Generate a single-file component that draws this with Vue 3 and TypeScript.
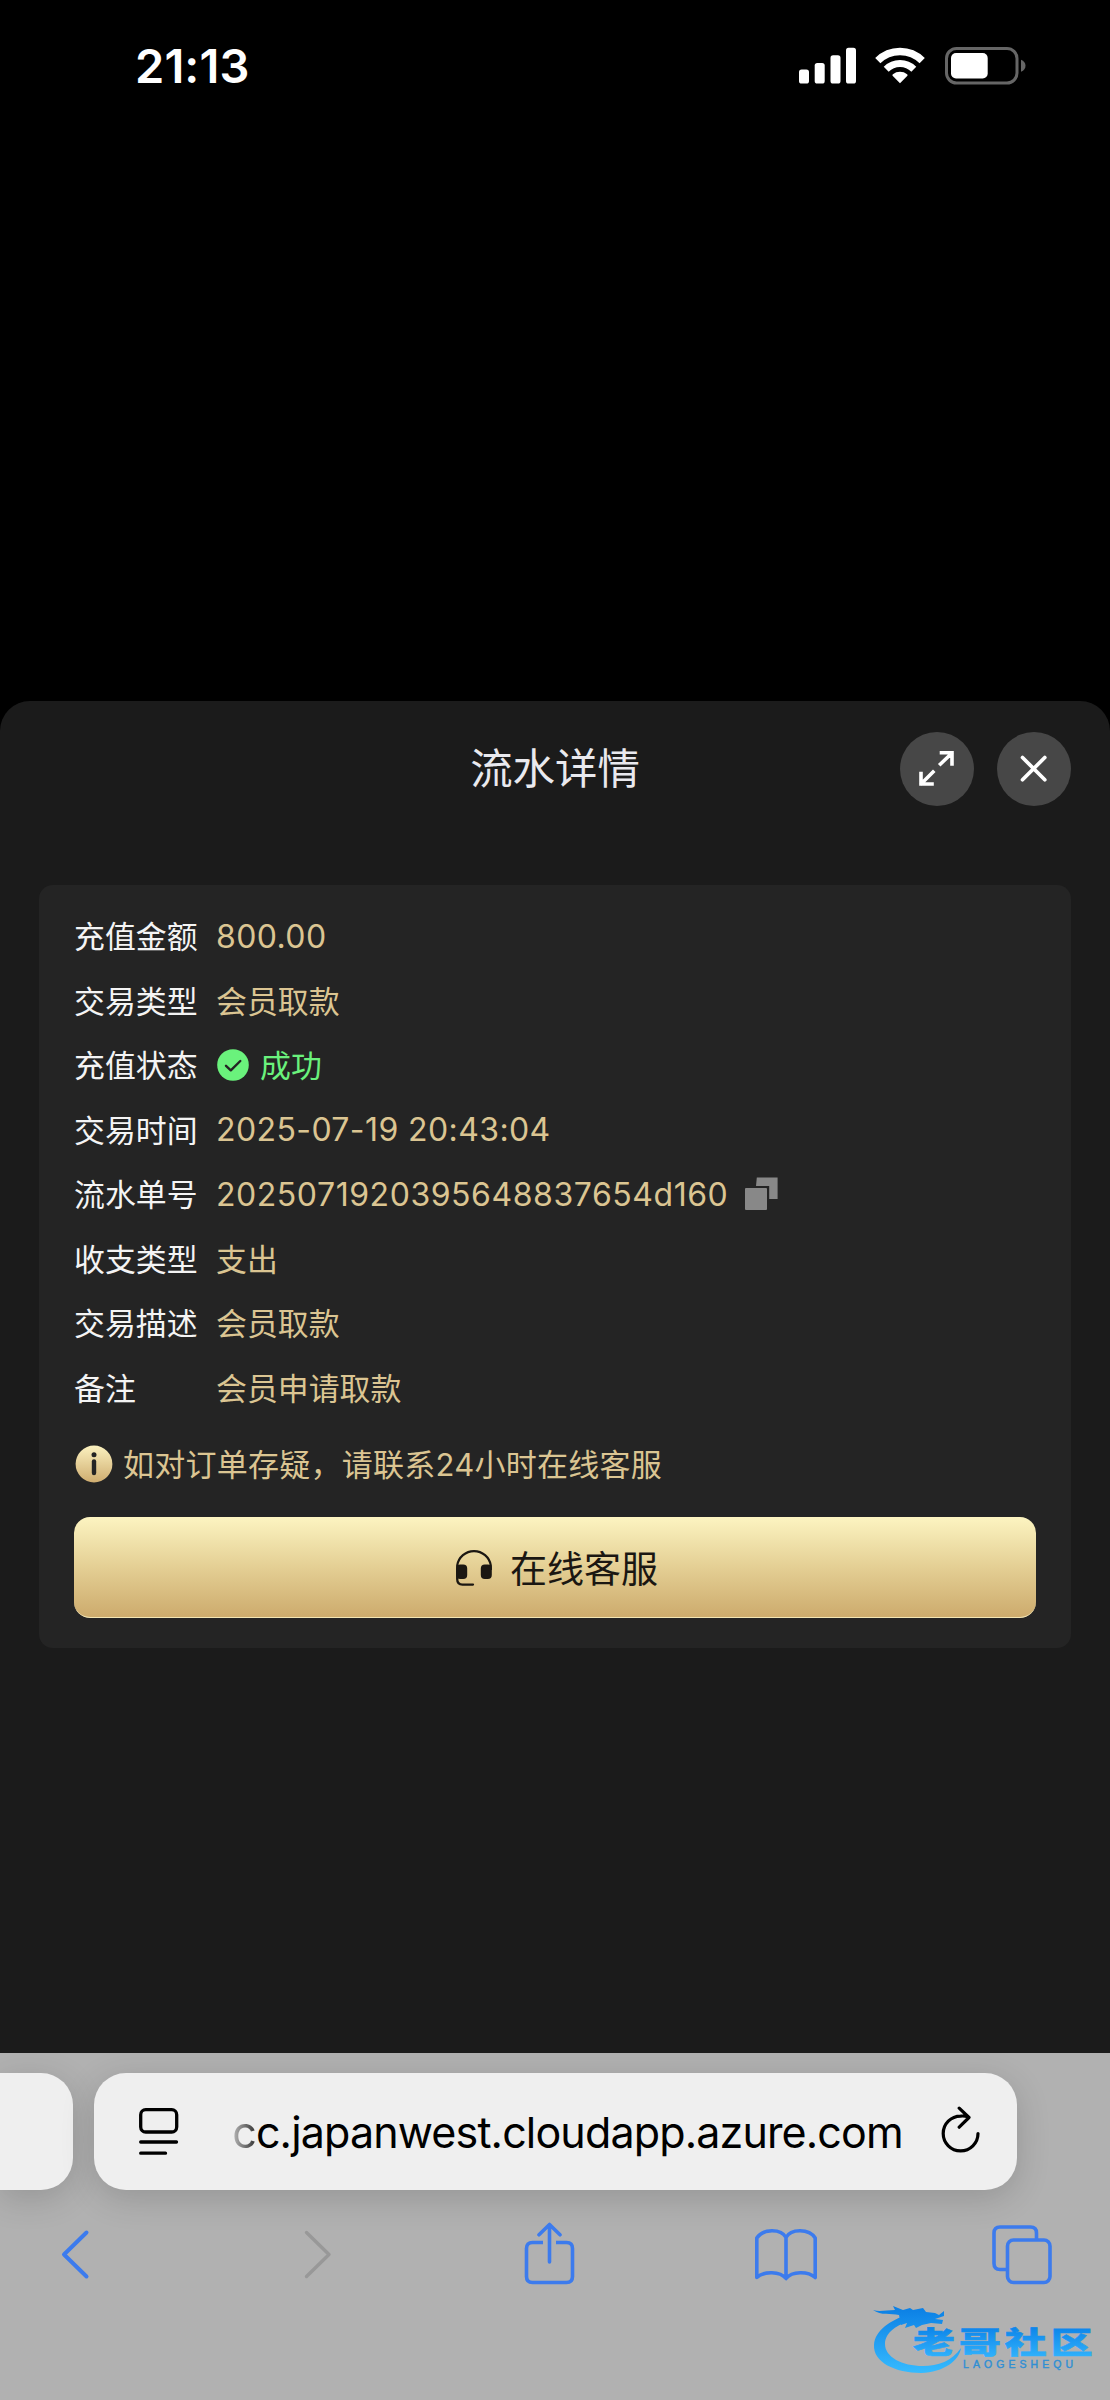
<script setup lang="ts">
interface DetailRow {
  label: string
  value: string
  kind?: 'status' | 'copy'
}

const rows: DetailRow[] = [
  { label: '充值金额', value: '800.00' },
  { label: '交易类型', value: '会员取款' },
  { label: '充值状态', value: '成功', kind: 'status' },
  { label: '交易时间', value: '2025-07-19 20:43:04' },
  { label: '流水单号', value: '2025071920395648837654d160', kind: 'copy' },
  { label: '收支类型', value: '支出' },
  { label: '交易描述', value: '会员取款' },
  { label: '备注', value: '会员申请取款' },
]
</script>

<template>
  <div class="screen" lang="zh-CN">
    <header class="status-bar">
      <span class="clock">21:13</span>
      <div class="indicators">
        <svg class="signal" width="58" height="37" viewBox="0 0 58 37" fill="#fff">
          <rect x="0" y="22.5" width="10" height="14" rx="2.6" />
          <rect x="15.7" y="16" width="10" height="20.5" rx="2.6" />
          <rect x="31.5" y="8.3" width="10" height="28.2" rx="2.6" />
          <rect x="47" y="0.7" width="10" height="35.8" rx="2.6" />
        </svg>
        <svg class="wifi" width="50" height="37" viewBox="0 0 50 37">
          <g fill="none" stroke="#fff">
            <path d="M2.8 13.7A31.5 31.5 0 0 1 47.2 13.7" stroke-width="7.4" />
            <path d="M11.2 22.3A19.6 19.6 0 0 1 38.8 22.3" stroke-width="7" />
          </g>
          <path d="M25 36.300 17.600 28.800Q17 28 17.900 27.300A11.500 11.500 0 0 1 32.100 27.300Q33 28 32.400 28.800Z" fill="#fff" />
        </svg>
        <svg class="battery" width="82" height="38" viewBox="0 0 82 38">
          <rect x="1.5" y="1.5" width="70.5" height="34.5" rx="10" fill="none" stroke="#666" stroke-width="3" />
          <rect x="6" y="6" width="36.7" height="25.5" rx="5" fill="#fff" />
          <path d="M76 12.700Q80.500 14.500 80.500 18.700T76 24.700Z" fill="#666" />
        </svg>
      </div>
    </header>

    <main class="sheet">
      <div class="sheet-head">
        <h1>流水详情</h1>
        <div class="actions">
          <button class="round" aria-label="全屏">
            <svg width="74" height="74" viewBox="0 0 74 74" fill="none" stroke="#fff" stroke-width="3.6" stroke-linecap="square">
              <path d="M40.500 32 51.500 21.500M41.500 20.700H52V32M33 40 21.500 51.500M21 41.500V52H32" />
            </svg>
          </button>
          <button class="round" aria-label="关闭">
            <svg width="74" height="74" viewBox="0 0 74 74" fill="none" stroke="#fff" stroke-width="3.7" stroke-linecap="round">
              <path d="M25.500 25.500 47.800 47.800M47.800 25.500 25.500 47.800" />
            </svg>
          </button>
        </div>
      </div>

      <section class="card">
        <dl>
          <div v-for="row in rows" :key="row.label" class="row">
            <dt>{{ row.label }}</dt>
            <dd :class="row.kind">
              <svg v-if="row.kind === 'status'" width="32" height="32" viewBox="0 0 32 32">
                <circle cx="16" cy="16" r="15.8" fill="#6af27c" />
                <path d="M9 16.800 13.800 21.300 23.300 12" fill="none" stroke="#242424" stroke-width="2.4" stroke-linecap="round" stroke-linejoin="round" />
              </svg>
              <span :class="/^\d/.test(row.value) ? 'num' : 'han'">{{ row.value }}</span>
              <svg v-if="row.kind === 'copy'" width="34" height="34" viewBox="0 0 34 34" fill="#888">
                <path d="M11.800 0.500H32.600V22H24.200V8.900H11Z" />
                <rect x="0" y="11" width="22" height="22" rx="1" />
              </svg>
            </dd>
          </div>
        </dl>

        <p class="notice">
          <svg width="38" height="38" viewBox="0 0 38 38">
            <defs>
              <linearGradient id="coin" x1="0" y1="0" x2="0" y2="1">
                <stop offset="0" stop-color="#fbf1bf" />
                <stop offset="1" stop-color="#cfad70" />
              </linearGradient>
            </defs>
            <circle cx="19" cy="19" r="18.4" fill="url(#coin)" />
            <circle cx="19" cy="9.8" r="2.5" fill="#242424" />
            <path d="M19 16.500V28" stroke="#242424" stroke-width="4.4" stroke-linecap="round" />
          </svg>
          <span class="han">如对订单存疑，请联系24小时在线客服</span>
        </p>

        <button class="service">
          <svg width="37" height="39" viewBox="0 0 37 39">
            <path d="M1.200 22V17.500A17 17 0 0 1 34.800 17.500V22" fill="none" stroke="#1b1712" stroke-width="2.2" />
            <rect x="0.2" y="16.5" width="11" height="14.5" rx="4" fill="#1b1712" />
            <rect x="24.8" y="16.5" width="11" height="14.5" rx="4" fill="#1b1712" />
            <path d="M1.200 22V31Q1.200 36.600 6.500 36.600H17" fill="none" stroke="#1b1712" stroke-width="2.3" stroke-linecap="round" />
          </svg>
          <span class="han">在线客服</span>
        </button>
      </section>
    </main>

    <footer class="browser">
      <div class="tabs">
        <div class="tab previous"></div>
        <div class="tab current">
          <svg width="40" height="48" viewBox="0 0 40 48" fill="none" stroke="#000" stroke-width="3.3" stroke-linecap="round">
            <rect x="1.7" y="1.7" width="36" height="22.3" rx="5" />
            <path d="M1.700 34H37.500M1.700 45.200H26.500" />
          </svg>
          <span class="url"><i>c</i>c.japanwest.cloudapp.azure.com</span>
          <svg class="reload" width="40" height="48" viewBox="0 0 40 48" fill="none" stroke="#000" stroke-width="3.2" stroke-linecap="round" stroke-linejoin="round">
            <path d="M37 27.500A17.400 17.400 0 1 1 19.600 10.100Q24 9.700 27.500 11.300M18.200 2.200 28 11.500 18.200 21.200" />
          </svg>
        </div>
      </div>
      <nav class="toolbar">
        <svg width="64" height="64" viewBox="-17 0 64 64" stroke-width="4" stroke-linecap="round">
          <path d="M26.500 10.500 4 32.500 26.500 54.500" />
        </svg>
        <svg class="disabled" width="64" height="64" viewBox="-23 0 64 64" stroke-width="3.4" stroke-linecap="round">
          <path d="M3.500 10.500 26 32.500 3.500 54.500" />
        </svg>
        <svg width="64" height="64" viewBox="-7.5 0 64 64" stroke-width="3.6">
          <path d="M19.500 20.500H9Q3 20.500 3 26.500V54.500Q3 60.500 9 60.500H43Q49 60.500 49 54.500V26.500Q49 20.500 43 20.500H32.500" />
          <path d="M26 40V2.800M15.500 12.800 26 2.500 36.500 12.800" stroke-linecap="round" />
        </svg>
        <svg width="64" height="64" viewBox="-1 0 64 64" stroke-width="3.6">
          <path d="M32 15.500C27 6.500 9 6.500 2.800 16V55.500C10 49 26 49 32 56.500C38 49 54 49 61.200 55.500V16C55 6.500 37 6.500 32 15.500ZM32 15.500V56" />
        </svg>
        <svg width="64" height="64" viewBox="-1 0 64 64" stroke-width="3.6">
          <rect x="16.5" y="18" width="42.5" height="42.5" rx="6" />
          <path d="M16.500 47.500H9Q3 47.500 3 41.500V11Q3 5 9 5H39.500Q45.500 5 45.500 11V18" />
        </svg>
      </nav>
      <svg class="brand" width="230" height="76" viewBox="0 0 230 76">
        <defs>
          <linearGradient id="sea" gradientUnits="userSpaceOnUse" x1="0" y1="5" x2="0" y2="72">
            <stop offset="0" stop-color="#0a7ee4" />
            <stop offset="1" stop-color="#36bbff" />
          </linearGradient>
          <linearGradient id="ink" x1="0" y1="0" x2="0" y2="1">
            <stop offset="0.2" stop-color="#0d85ea" />
            <stop offset="0.9" stop-color="#31b2fb" />
          </linearGradient>
        </defs>
        <g fill="url(#sea)">
          <path d="M36 14C20 19 4 29 3 44C2 61 24 72 50 72C73 71 88 60 90 47C81 60 67 65 52 65C31 65 14 56 14 43C14 31 27 23 40 20Z" />
          <path d="M2 9C9 11 15 9 24 9L22 5L32 9L39 7L42 9L52 7L55 11L64 12L68 14L73 10V15L64 18L72 19L71 23L60 22L51 24L45 27L43 24L34 27L36 22L30 24L28 14C20 12 10 15 2 9Z" />
        </g>
        <text class="brand-name" transform="translate(42 52.3) scale(1.42 1)" fill="url(#ink)" stroke="url(#ink)" stroke-width="0.6" textLength="126.5">老哥社区</text>
        <text class="brand-latin" x="92" y="67" fill="#2f8fd4" stroke="#2f8fd4" stroke-width="0.4" textLength="110">LAOGESHEQU</text>
      </svg>
    </footer>
  </div>
</template>

<style>
body {
  margin: 0;
  background: #000;
}
</style>

<style scoped>
.screen {
  display: flex;
  flex-direction: column;
  width: 1110px;
  height: 2400px;
  overflow: hidden;
  background: #000;
  font-family: Inter, "Noto Sans CJK SC", sans-serif;
}

.status-bar {
  display: flex;
  flex: none;
  justify-content: space-between;
  align-items: flex-start;
  box-sizing: border-box;
  height: 701px;
  padding: 46px 83px 0 135px;
  color: #fff;
}

.clock {
  font-size: 47px;
  font-weight: 600;
  line-height: 40px;
  letter-spacing: 0.1px;
}

.indicators {
  display: flex;
  padding-top: 0.5px;
}

.signal {
  margin-right: 18px;
}

.wifi {
  margin-right: 20px;
}

.sheet {
  flex: none;
  box-sizing: border-box;
  height: 1352px;
  padding: 0 39px;
  border-radius: 30px 30px 0 0;
  background: #1b1b1b;
}

.sheet-head {
  display: grid;
  grid-template-columns: 1fr auto 1fr;
  align-items: center;
  height: 136px;
  margin-bottom: 48px;
}

h1 {
  grid-column: 2;
  margin: 0;
  color: #e9e9ee;
  font-size: 42.4px;
  font-weight: 400;
  line-height: 60px;
}

.actions {
  display: flex;
  justify-content: flex-end;
  gap: 23px;
}

button {
  padding: 0;
  border: 0;
  font: inherit;
}

.round {
  width: 74px;
  height: 74px;
  border-radius: 50%;
  background: #474747;
}

.round svg {
  display: block;
}

.card {
  box-sizing: border-box;
  height: 763px;
  padding: 19px 35px 0;
  border-radius: 14px;
  background: #242424;
}

dl {
  margin: 0;
  font-size: 30.9px;
}

.row {
  display: flex;
  align-items: center;
  height: 64.5px;
}

dt {
  width: 142px;
  padding-bottom: 3px;
  color: #f4f4f4;
}

dd {
  display: flex;
  align-items: center;
  margin: 0;
  color: #dbc592;
}

.han {
  padding-bottom: 3px;
}

.num {
  font-size: 32px;
  letter-spacing: 0.4px;
}

dd.status {
  gap: 11px;
  padding-left: 1px;
  color: #6af27c;
}

dd.copy {
  gap: 17px;
}

dd.copy .num {
  letter-spacing: 0.55px;
}

.notice {
  display: flex;
  align-items: center;
  gap: 10px;
  height: 38px;
  margin: 25px 0 34px;
  padding-left: 1px;
  color: #dbc592;
  font-size: 31px;
  letter-spacing: 0.25px;
}

.service {
  display: flex;
  justify-content: center;
  align-items: center;
  gap: 17px;
  box-sizing: border-box;
  width: 962px;
  height: 101px;
  padding-left: 4px;
  border-bottom: 1px solid #f3e5b4;
  border-radius: 16px;
  background: linear-gradient(#fcf4c1, #e4cf94 50%, #cdab6d);
  color: #1b1712;
  font-size: 37px;
}

.service .han {
  padding-bottom: 1px;
}

.browser {
  position: relative;
  flex: 1;
  overflow: hidden;
  background: #b1b1b1;
}

.tabs {
  display: flex;
  gap: 21px;
  padding-top: 20px;
}

.tab {
  height: 117px;
  background: #efefef;
  box-shadow: 0 8px 34px rgba(0, 0, 0, 0.16);
}

.previous {
  width: 72.5px;
  border-radius: 0 32px 32px 0;
}

.current {
  display: flex;
  justify-content: space-between;
  align-items: center;
  box-sizing: border-box;
  width: 923px;
  padding: 0 35px 0 45px;
  border-radius: 32px;
}

.reload {
  margin-bottom: 3px;
}

.url {
  margin-left: 15px;
  color: #000;
  font-size: 43px;
  letter-spacing: -0.85px;
}

.url i {
  background: linear-gradient(90deg, #bbb, #333);
  background-clip: text;
  color: transparent;
  font-style: normal;
}

.toolbar {
  display: flex;
  justify-content: space-between;
  padding: 32px 56.5px 0 43px;
}

.toolbar svg {
  fill: none;
  stroke: #3c7bed;
  stroke-linejoin: round;
}

.toolbar .disabled {
  stroke: #989898;
}

.brand {
  position: absolute;
  top: 248px;
  left: 871px;
}

.brand-name {
  font-family: "Noto Sans CJK SC", sans-serif;
  font-size: 29.5px;
  font-weight: 900;
}

.brand-latin {
  font-family: "Liberation Sans", sans-serif;
  font-size: 10.5px;
}
</style>
